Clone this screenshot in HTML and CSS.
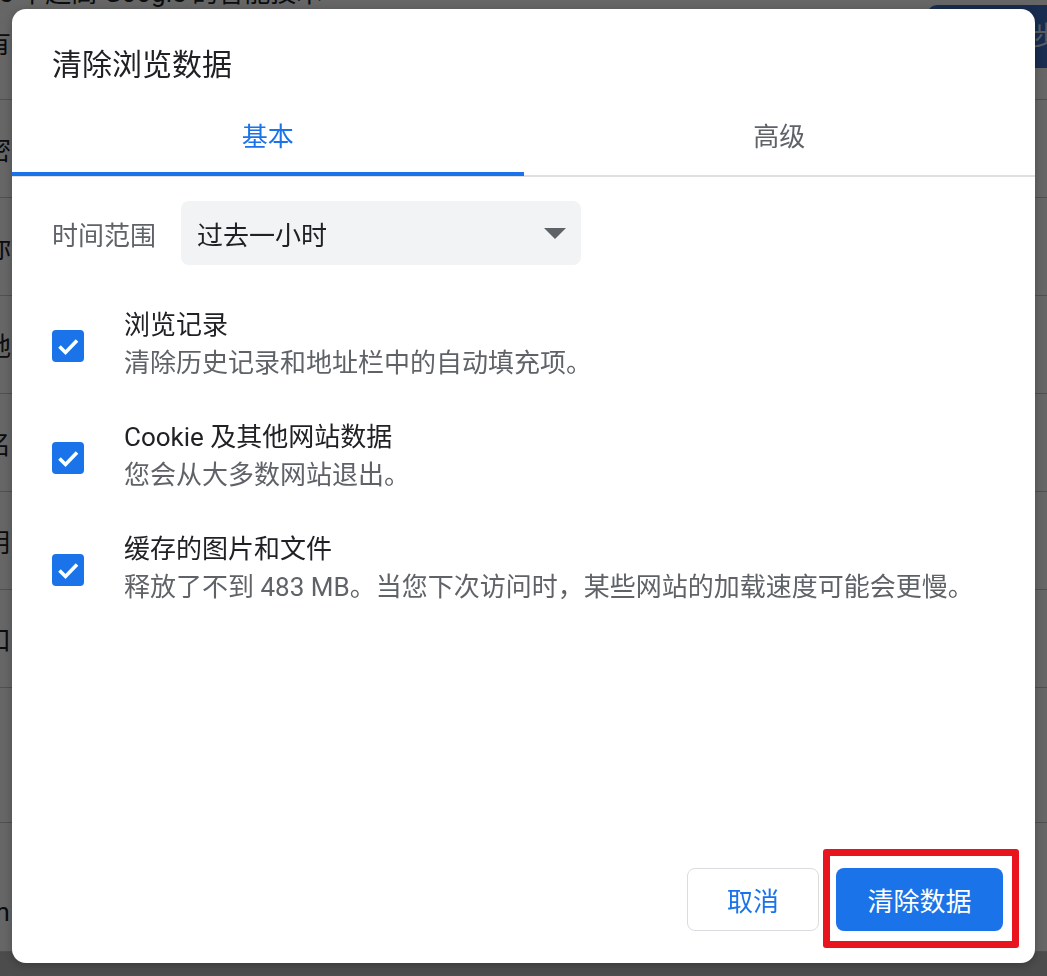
FILE: index.html
```html
<!DOCTYPE html>
<html lang="zh-CN">
<head>
<meta charset="utf-8">
<title>清除浏览数据</title>
<link rel="stylesheet" href="styles.css">
</head>
<body>
<div class="page">
  <div class="top">
    <div class="top-left">
      <div class="top-line">e 中超高 Google 的智能技术</div>
      <div class="top-item">有</div>
    </div>
    <div class="top-btn">步</div>
  </div>
  <div class="row">密</div>
  <div class="row">你</div>
  <div class="row">地</div>
  <div class="row">名</div>
  <div class="row">用</div>
  <div class="row">口</div>
  <div class="row tall"></div>
  <div class="row tall2">m</div>
  <div class="foot"></div>
</div>

<div class="overlay"></div>

<div class="dialog" role="dialog">
  <div class="d-title">清除浏览数据</div>
  <div class="tabs">
    <div class="tab active">基本</div>
    <div class="tab">高级</div>
  </div>
  <div class="d-body">
    <div class="range">
      <span class="range-label">时间范围</span>
      <div class="select">
        <span>过去一小时</span>
        <svg class="caret" width="22" height="11" viewBox="0 0 22 11"><path d="M0 0 H22 L11 11 Z" fill="#5f6368"/></svg>
      </div>
    </div>
    <div class="opt">
      <span class="cb"><svg width="32" height="32" viewBox="0 0 32 32"><path d="M7.5 16.5 L13.5 22.5 L25 10.5" fill="none" stroke="#fff" stroke-width="3.6"/></svg></span>
      <div class="opt-text">
        <div class="opt-title">浏览记录</div>
        <div class="opt-sub">清除历史记录和地址栏中的自动填充项。</div>
      </div>
    </div>
    <div class="opt">
      <span class="cb"><svg width="32" height="32" viewBox="0 0 32 32"><path d="M7.5 16.5 L13.5 22.5 L25 10.5" fill="none" stroke="#fff" stroke-width="3.6"/></svg></span>
      <div class="opt-text">
        <div class="opt-title">Cookie 及其他网站数据</div>
        <div class="opt-sub">您会从大多数网站退出。</div>
      </div>
    </div>
    <div class="opt">
      <span class="cb"><svg width="32" height="32" viewBox="0 0 32 32"><path d="M7.5 16.5 L13.5 22.5 L25 10.5" fill="none" stroke="#fff" stroke-width="3.6"/></svg></span>
      <div class="opt-text">
        <div class="opt-title">缓存的图片和文件</div>
        <div class="opt-sub">释放了不到 483 MB。当您下次访问时，某些网站的加载速度可能会更慢。</div>
      </div>
    </div>
  </div>
  <div class="d-foot">
    <button class="btn cancel">取消</button>
    <span class="mark"><button class="btn primary">清除数据</button></span>
  </div>
</div>
</body>
</html>
```

FILE: styles.css
```css
html, body {
  margin: 0;
  padding: 0;
}
body {
  width: 1047px;
  height: 976px;
  overflow: hidden;
  position: relative;
  font-family: Roboto, "Noto Sans CJK SC", sans-serif;
  color: #202124;
}

/* background page */
.page {
  display: flex;
  flex-direction: column;
  height: 976px;
  background: #fff;
}
.top {
  height: 100px;
  flex: none;
  box-sizing: border-box;
  border-bottom: 1px solid #c8c8c8;
  display: flex;
  justify-content: space-between;
  align-items: flex-start;
}
.top-left {
  display: flex;
  flex-direction: column;
}
.top-line {
  font-size: 26px;
  line-height: 30px;
  margin-top: -22px;
  margin-left: -1px;
  color: #202124;
  white-space: nowrap;
}
.top-item {
  font-size: 26px;
  line-height: 36px;
  margin-top: 18px;
  margin-left: -15px;
}
.top-btn {
  margin-top: 5px;
  width: 120px;
  height: 63px;
  border-radius: 10px 0 0 10px;
  background: #3f70c8;
  color: #dfe6f3;
  font-size: 26px;
  line-height: 63px;
  padding-left: 106px;
  box-sizing: border-box;
  overflow: hidden;
}
.row {
  height: 98px;
  flex: none;
  box-sizing: border-box;
  border-bottom: 1px solid #c8c8c8;
  display: flex;
  align-items: center;
  margin-left: -15px;
  padding-left: 0;
  font-size: 26px;
}
.row.tall { height: 135px; }
.row.tall2 { height: 129px; padding-top: 50px; padding-left: 2px; }
.foot {
  flex: 1;
  background: #bdbdbd;
}

.overlay {
  position: fixed;
  inset: 0;
  background: rgba(0, 0, 0, 0.6);
}

/* dialog */
.dialog {
  position: absolute;
  left: 12px;
  top: 9px;
  width: 1023px;
  height: 954px;
  background: #fff;
  border-radius: 14px;
  box-shadow: 0 2px 8px rgba(0, 0, 0, 0.25);
  display: flex;
  flex-direction: column;
}
.d-title {
  font-size: 30px;
  line-height: 40px;
  padding: 36px 40px 0;
  color: #202124;
}
.tabs {
  margin-top: 16px;
  display: flex;
  border-bottom: 2px solid #e0e0e0;
}
.tab {
  flex: 1;
  height: 75px;
  box-sizing: border-box;
  text-align: center;
  font-size: 26px;
  line-height: 72px;
  color: #5f6368;
  margin-bottom: -1px;
}
.tab.active {
  color: #1a73e8;
  box-shadow: inset 0 -4px 0 #1a73e8;
}
.d-body {
  padding: 0 40px;
  display: flex;
  flex-direction: column;
}
.range {
  margin-top: 24px;
  display: flex;
  align-items: center;
  gap: 25px;
}
.range-label {
  font-size: 26px;
  color: #5f6368;
}
.select {
  width: 400px;
  height: 64px;
  box-sizing: border-box;
  background: #f1f3f4;
  border-radius: 8px;
  padding: 0 15px 0 16px;
  display: flex;
  align-items: center;
  justify-content: space-between;
  font-size: 26px;
  color: #202124;
}
.opt {
  display: flex;
  align-items: center;
  gap: 40px;
  margin-top: 36px;
}
.range + .opt { margin-top: 41px; }
.cb {
  width: 32px;
  height: 32px;
  flex: none;
  border-radius: 4px;
  background: #1a73e8;
  display: flex;
  margin-top: 4px;
}
.opt-text {
  display: flex;
  flex-direction: column;
}
.opt-title {
  font-size: 26px;
  line-height: 38px;
  color: #202124;
}
.opt-sub {
  font-size: 26px;
  line-height: 38px;
  color: #5f6368;
}
.d-foot {
  margin-top: auto;
  padding: 0 32px 32px 0;
  display: flex;
  justify-content: flex-end;
  align-items: center;
  gap: 17px;
}
.btn {
  height: 63px;
  border-radius: 8px;
  font-family: Roboto, "Noto Sans CJK SC", sans-serif;
  font-size: 26px;
  padding: 0;
  cursor: pointer;
}
.cancel {
  width: 132px;
  background: #fff;
  border: 1.5px solid #dadce0;
  color: #1a73e8;
}
.primary {
  width: 167px;
  background: #1a73e8;
  border: none;
  color: #fff;
  display: block;
}
.mark {
  position: relative;
  display: block;
}
.mark::after {
  content: "";
  position: absolute;
  left: -13px;
  right: -16px;
  top: -19px;
  bottom: -17px;
  border: 7px solid #e8151f;
  border-radius: 3px;
  pointer-events: none;
}
```
